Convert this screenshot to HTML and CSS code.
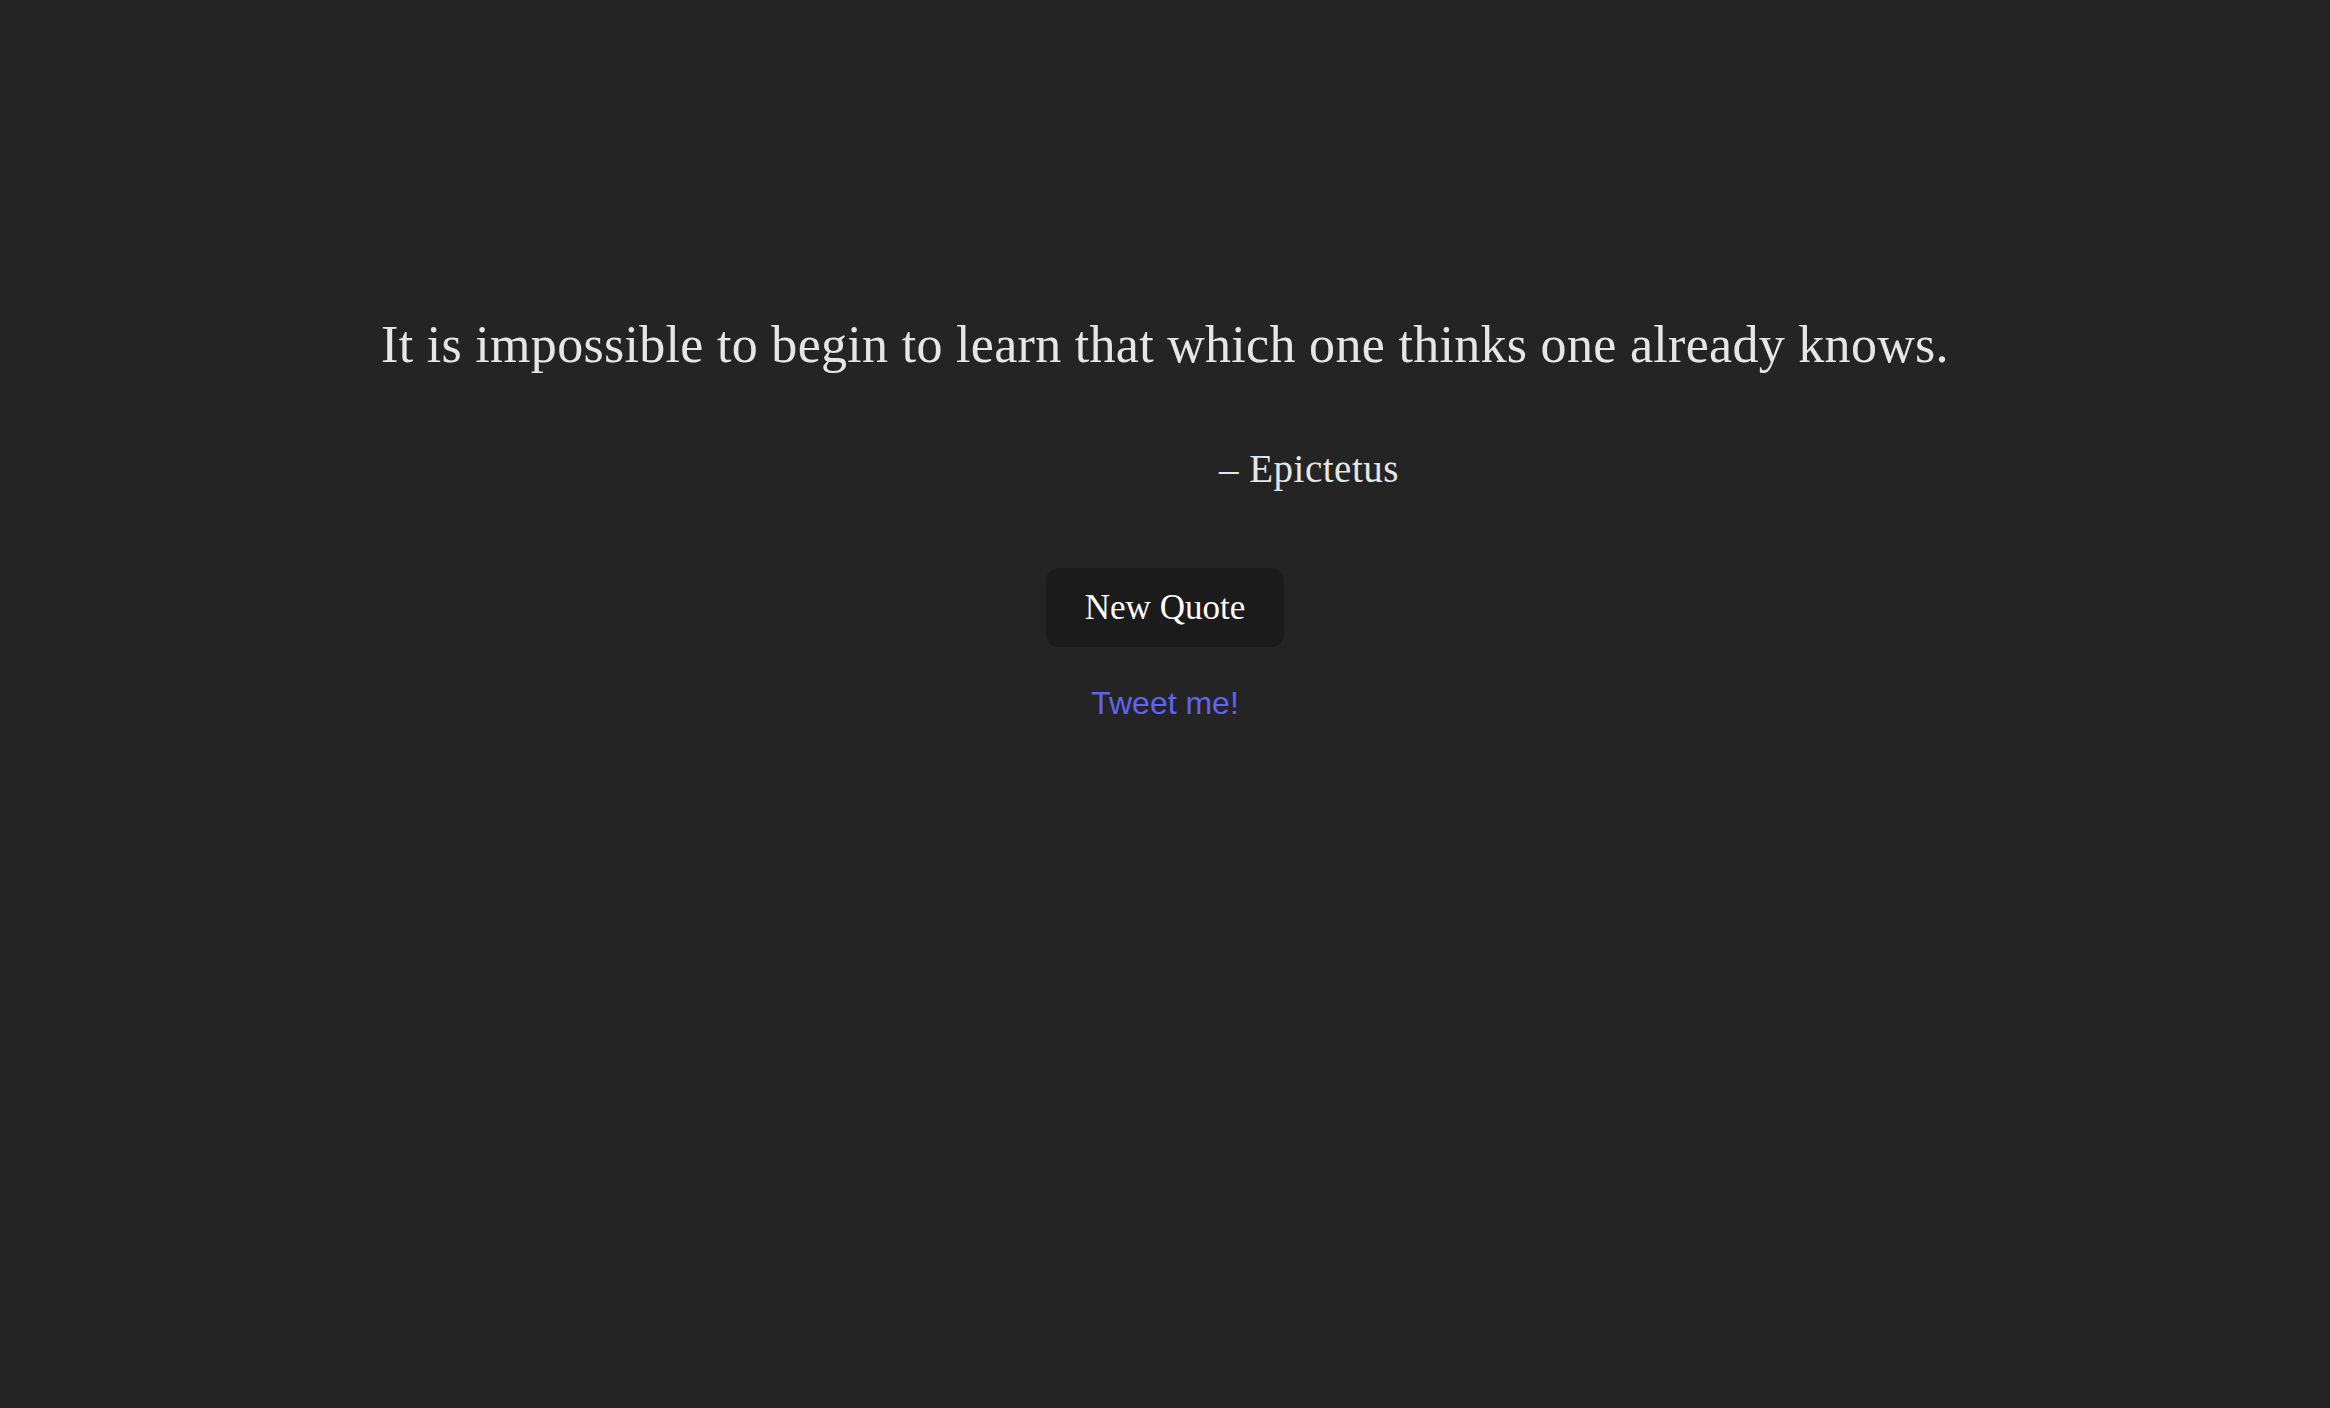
FILE: index.html
```html
<!DOCTYPE html>
<html lang="en">
<head>
<meta charset="utf-8">
<title>Random Quote</title>
<link rel="stylesheet" href="styles.css">
</head>
<body>
<main class="quote-box">
  <p class="quote-text">It is impossible to begin to learn that which one thinks one already knows.</p>
  <p class="quote-author">– Epictetus</p>
  <button class="new-quote" type="button">New Quote</button>
  <a class="tweet" href="#">Tweet me!</a>
</main>
</body>
</html>
```

FILE: styles.css
```css
html, body {
  margin: 0;
  padding: 0;
  background: #242424;
}

body {
  min-height: 1408px;
  font-family: Georgia, "Liberation Serif", "DejaVu Serif", serif;
}

.quote-box {
  display: flex;
  flex-direction: column;
  align-items: center;
  padding-top: 315px;
}

.quote-text {
  margin: 0;
  font-size: 52px;
  line-height: 60px;
  letter-spacing: 0.3px;
  color: #e6e6e6;
  text-align: center;
}

.quote-author {
  margin: 72px 0 0;
  padding-left: 288px;
  font-size: 39px;
  line-height: 44px;
  letter-spacing: 0.5px;
  color: #e6e6e6;
}

.new-quote {
  margin-top: 77px;
  height: 79px;
  padding: 0 39px;
  border: none;
  border-radius: 13px;
  background: #1b1b1b;
  color: #ffffff;
  font-family: Georgia, "Liberation Serif", serif;
  font-size: 35px;
  line-height: 79px;
  cursor: pointer;
}

.tweet {
  margin-top: 38px;
  font-family: Arial, "Liberation Sans", sans-serif;
  font-size: 32px;
  line-height: 37px;
  color: #6262f3;
  text-decoration: none;
}
```
